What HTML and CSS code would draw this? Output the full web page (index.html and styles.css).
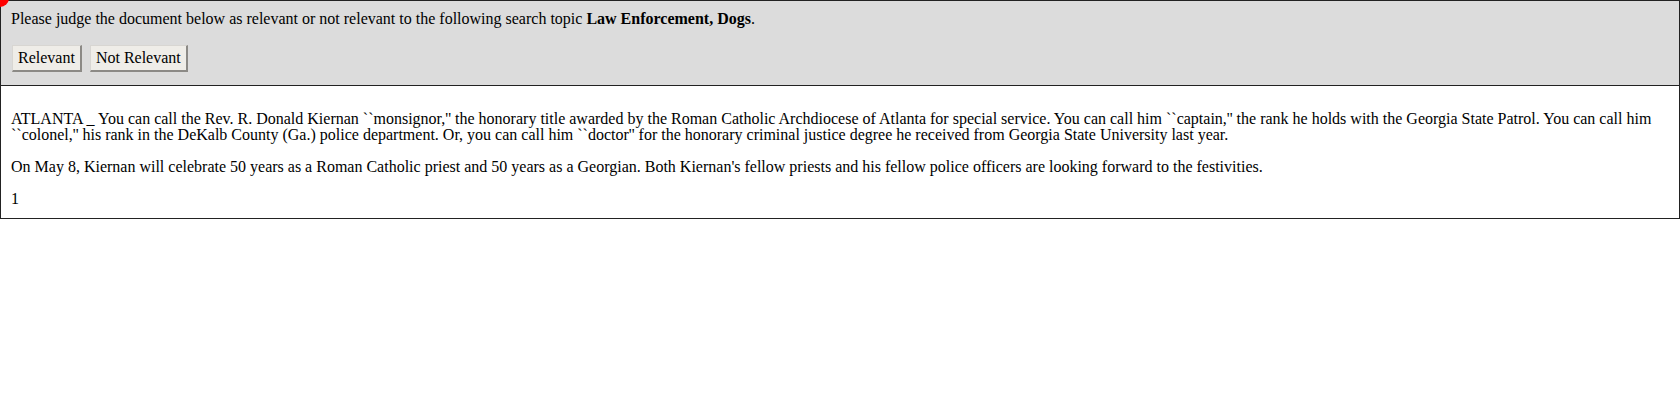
FILE: index.html
```html
<!DOCTYPE html>
<html>
<head>
<meta charset="utf-8">
<title>Relevance judgment</title>
<link rel="stylesheet" href="styles.css">
</head>
<body>
<div class="page">
  <span class="dot"></span>
  <div class="header">
    <p class="prompt">Please judge the document below as relevant or not relevant to the following search topic <b>Law Enforcement, Dogs</b>.</p>
    <div class="buttons">
      <button class="btn" type="button">Relevant</button>
      <button class="btn" type="button">Not Relevant</button>
    </div>
  </div>
  <div class="doc">
    <p>ATLANTA _ You can call the Rev. R. Donald Kiernan ``monsignor,'' the honorary title awarded by the Roman Catholic Archdiocese of Atlanta for special service. You can call him ``captain,'' the rank he holds with the Georgia State Patrol. You can call him ``colonel,'' his rank in the DeKalb County (Ga.) police department. Or, you can call him ``doctor'' for the honorary criminal justice degree he received from Georgia State University last year.</p>
    <p>On May 8, Kiernan will celebrate 50 years as a Roman Catholic priest and 50 years as a Georgian. Both Kiernan's fellow priests and his fellow police officers are looking forward to the festivities.</p>
    <p class="last">1</p>
  </div>
</div>
</body>
</html>
```
FILE: styles.css
```css
html, body {
  margin: 0;
  padding: 0;
  background: #ffffff;
}
body {
  font-family: "Liberation Serif", "Times New Roman", serif;
  font-size: 16px;
  color: #000;
}
.page {
  position: relative;
}
.dot {
  position: absolute;
  left: -9px;
  top: -11px;
  width: 18px;
  height: 18px;
  border-radius: 50%;
  background: #ff0000;
  z-index: 1;
}
.header {
  background: #dcdcdc;
  border: 1px solid #222;
  padding: 9px 10px 13px 10px;
}
.prompt {
  margin: 0;
  line-height: 18px;
}
.buttons {
  display: flex;
  gap: 8px;
  margin-top: 17px;
  padding-left: 1px;
}
.btn {
  font-family: "Liberation Serif", "Times New Roman", serif;
  font-size: 16px;
  color: #000;
  background: #efede8;
  height: 27px;
  padding: 0 5px;
  border-style: solid;
  border-width: 1px 2px 2px 1px;
  border-color: #d8d6d2 #8c8a86 #8c8a86 #d8d6d2;
  border-radius: 0;
}
.doc {
  border: 1px solid #222;
  border-top: none;
  padding: 9px 10px 11px 10px;
  line-height: 16px;
}
.doc p {
  margin: 16px 0;
}
.doc p.last {
  margin-bottom: 0;
}
```
